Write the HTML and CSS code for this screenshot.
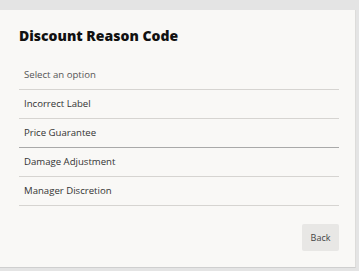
FILE: index.html
```html
<!DOCTYPE html>
<html>
<head>
<meta charset="utf-8">
<link rel="stylesheet" href="styles.css">
</head>
<body>
<div class="dialog">
  <h1 class="title">Discount Reason Code</h1>
  <ul class="options">
    <li class="option placeholder">Select an option</li>
    <li class="option">Incorrect Label</li>
    <li class="option hovered">Price Guarantee</li>
    <li class="option">Damage Adjustment</li>
    <li class="option">Manager Discretion</li>
  </ul>
  <div class="footer">
    <button class="btn">Back</button>
  </div>
</div>
</body>
</html>
```
FILE: styles.css
```css
html, body {
  margin: 0;
  padding: 0;
}
body {
  background: #e4e4e4;
  width: 359px;
  height: 271px;
  overflow: hidden;
  font-family: "Open Sans", "Noto Sans", sans-serif;
}
.dialog {
  margin-top: 10px;
  width: 356px;
  height: 258px;
  background: #f9f8f6;
  border-right: 1px solid #dddcda;
  border-bottom: 1px solid #cfcfcf;
  padding: 0 19px;
  box-sizing: border-box;
  display: flex;
  flex-direction: column;
}
.title {
  margin: 14px 0 0 0;
  font-size: 14px;
  line-height: 24px;
  font-weight: 800;
  color: #111;
}
.options {
  list-style: none;
  margin: 13px 0 0 0;
  padding: 0;
  width: 320px;
}
.option {
  height: 28px;
  line-height: 28px;
  padding-left: 5px;
  font-size: 9.6px;
  color: #333;
  border-bottom: 1px solid #d6d4d1;
}
.option.placeholder {
  color: #555;
}
.option.hovered {
  border-bottom-color: #a9a9a9;
}
.footer {
  display: flex;
  justify-content: flex-end;
  width: 320px;
  margin-top: 18px;
}
.btn {
  width: 37px;
  height: 27px;
  border: none;
  border-radius: 2px;
  background: #e8e7e5;
  color: #444;
  font-family: "Open Sans", "Noto Sans", sans-serif;
  font-size: 9px;
  padding: 0;
}
```
